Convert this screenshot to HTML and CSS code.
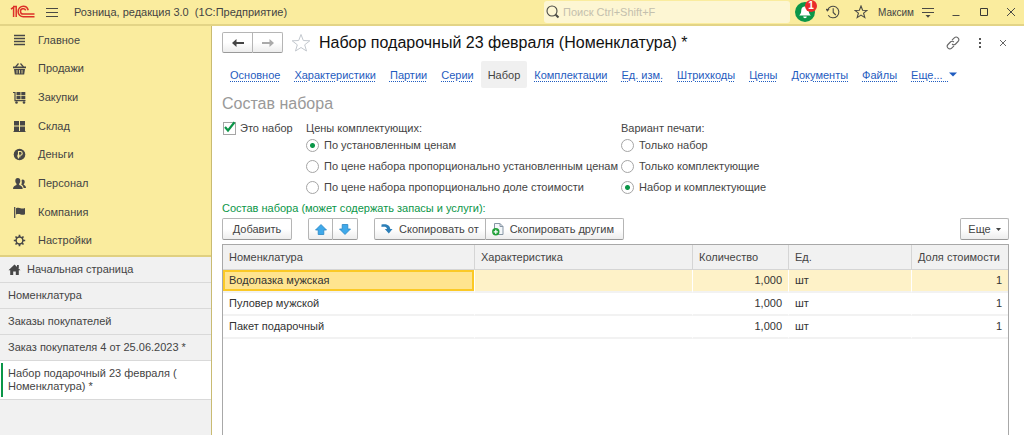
FILE: index.html
```html
<!DOCTYPE html>
<html lang="ru">
<head>
<meta charset="utf-8">
<title>Розница, редакция 3.0</title>
<link rel="stylesheet" href="styles.css">
</head>
<body>
<header class="topbar">
  <svg class="logo" width="26" height="14" viewBox="0 0 26 14" fill="none" stroke="#dc3028" stroke-width="1.5" aria-label="1С">
    <path d="M1 4.2 3.6 2.2V12M3 1.5H6.2V12"/>
    <path d="M18.2 5.2C17.6 2.9 15.7 1.3 13.3 1.3a5 5 0 0 0 0 10.4H24.5"/>
    <path d="M15.7 5.4a2.7 2.7 0 1 0-2.4 3.7H24.5"/>
  </svg>
  <button class="icon-btn menu-btn" aria-label="Меню">
    <svg width="12" height="11" viewBox="0 0 12 11" stroke="#4a4a45"><path d="M0 1.5h12M0 5.5h12M0 9.5h12"/></svg>
  </button>
  <div class="app-title">Розница, редакция 3.0&nbsp; (1С:Предприятие)</div>
  <label class="search">
    <svg width="14" height="14" viewBox="0 0 14 14" fill="none" stroke="#4a4a45"><circle cx="6" cy="6" r="5" stroke-width="1.1"/><path d="M9.7 9.7 12.5 12.5" stroke-width="2"/></svg>
    <input type="text" placeholder="Поиск Ctrl+Shift+F" aria-label="Поиск">
  </label>
  <button class="icon-btn bell" aria-label="Уведомления">
    <svg width="20" height="20" viewBox="0 0 20 20"><circle cx="10" cy="10" r="10" fill="#0b9648"/><path d="M10 4.500c-3 0-3.700 2.200-3.800 4.500-.1 2.300-.8 3.200-2 4.500h11.600c-1.200-1.300-1.900-2.200-2-4.500C13.700 6.700 13 4.500 10 4.500zM8.200 14.500h3.600a1.800 1.800 0 0 1-3.600 0z" fill="#fff"/></svg>
    <span class="badge">1</span>
  </button>
  <button class="icon-btn history" aria-label="История">
    <svg width="14" height="14" viewBox="0 0 14 14" fill="none" stroke="#4a4a45" stroke-width="1.1"><path d="M1.600 5A5.800 5.800 0 1 1 2.200 10.200M7.200 3.300V7.400L9.800 10"/><path d="M-.3 3.800 3.600 4.200 1.200 6.800z" fill="#4a4a45" stroke="none"/></svg>
  </button>
  <button class="icon-btn star" aria-label="Избранное">
    <svg width="14" height="14" viewBox="0 0 14 14" fill="none" stroke="#4a4a45" stroke-width="1.1"><path d="M7 1 8.600 5.200 13 5.400 9.600 8.200 10.800 12.600 7 10.100 3.200 12.600 4.400 8.200 1 5.400 5.400 5.200z"/></svg>
  </button>
  <a class="user" href="#">Максим</a>
  <button class="icon-btn panel" aria-label="Настройка панели">
    <svg width="12" height="11" viewBox="0 0 12 11"><path d="M0 1.500h12M0 5.500h12" stroke="#4a4a45"/><path d="M3.500 8h5L6 10.800z" fill="#4a4a45"/></svg>
  </button>
  <button class="icon-btn win" aria-label="Свернуть">
    <svg width="8" height="10" viewBox="0 0 8 10" stroke="#4a4a45"><path d="M0.500 8.500h7"/></svg>
  </button>
  <button class="icon-btn win" aria-label="Развернуть">
    <svg width="8" height="10" viewBox="0 0 8 10" fill="none" stroke="#3a3a36"><path d="M.5 1.500h7v7h-7z"/></svg>
  </button>
  <button class="icon-btn win" aria-label="Закрыть">
    <svg width="8" height="10" viewBox="0 0 8 10" stroke="#4a4a45"><path d="M0 1l8 8M8 1 0 9"/></svg>
  </button>
</header>

<div class="shell">
  <aside class="side">
    <nav class="sections">
      <a href="#"><svg viewBox="0 0 13 13"><path d="M1 1.500h11M1 4.500h11M1 7.500h11M1 10.500h11" stroke="#474747" stroke-width="1.500"/></svg>Главное</a>
      <a href="#"><svg viewBox="0 0 13 13" fill="#474747"><path d="M0 4.500h13v1.800H0zM1 7h11l-.8 5.500H1.800z"/><path d="M2.500 5 5.500 1.500M10.500 5 7.500 1.500" stroke="#474747" stroke-width="1.200"/><path d="M4 8v3.500M6.500 8v3.500M9 8v3.500" stroke="#faec9e" stroke-width=".8"/></svg>Продажи</a>
      <a href="#"><svg viewBox="0 0 13 13" fill="#474747"><path d="M0 1.500h2v8.200h10.500" fill="none" stroke="#474747" stroke-width="1.200"/><path d="M3.500 1h4v3.300h-4zM8.300 1h4v3.300h-4zM3.500 5h4v3.300h-4zM8.300 5h4v3.300h-4z"/><circle cx="3.500" cy="11.500" r="1.300"/><circle cx="11" cy="11.500" r="1.300"/></svg>Закупки</a>
      <a href="#"><svg viewBox="0 0 13 13" fill="#474747"><path d="M1 1h5v4.500H1zM7 1h5v4.500H7zM1 6.500h5V11H1zM7 6.500h5V11H7zM.5 11h12v1H.5z"/></svg>Склад</a>
      <a href="#"><svg viewBox="0 0 13 13"><circle cx="6.500" cy="6.500" r="5.800" fill="#474747"/><path d="M5.500 10.500V3.500h1.800a1.900 1.900 0 0 1 0 3.800H4.200M4.200 8.800h3.300" fill="none" stroke="#faec9e" stroke-width="1.100"/></svg>Деньги</a>
      <a href="#"><svg viewBox="0 0 13 13" fill="#474747"><path d="M4.800 1c1.700 0 2.600 1.200 2.500 3-.1 1.400-.6 2.100-1.100 2.800v1.300c1.500.6 3.500 1.200 3.500 3.900H0c0-2.700 2-3.300 3.500-3.900V6.800C3 6.100 2.400 5.400 2.300 4 2.200 2.200 3.100 1 4.800 1z"/><path d="M9.600 2.500c1.500 0 2.200 1 2.100 2.400 0 1-.5 1.700-.9 2.200v.9c1.200.4 2.200 1 2.200 3h-2.400c-.1-1.700-.9-2.600-2.300-3.300.6-1.300.6-2.300.3-4.600.2-.4.600-.6 1-.6z"/></svg>Персонал</a>
      <a href="#"><svg viewBox="0 0 13 13"><path d="M1.700 1v11" stroke="#474747" stroke-width="1.200"/><path d="M3 2.200c2-.9 3.600-.4 4.500 0 1.200.5 2.800.6 4.500-.2v6.300c-1.600.8-3.200.6-4.400.1C6.300 7.900 4.800 7.700 3 8.500z" fill="#474747"/></svg>Компания</a>
      <a href="#"><svg viewBox="0 0 13 13" fill="none" stroke="#474747"><circle cx="6.500" cy="6.500" r="3.400" stroke-width="1.500"/><path d="M6.500.8V3M6.500 10v2.200M.8 6.500H3M10 6.500h2.200M2.500 2.500 4 4M9 9l1.500 1.500M2.500 10.500 4 9M9 4l1.500-1.500" stroke-width="1.700"/></svg>Настройки</a>
    </nav>
    <nav class="windows">
      <a href="#"><svg width="13" height="12" viewBox="0 0 13 12"><path d="M6.500.5 12.500 6.200H10.800V11H7.800V7.500H5.200V11H2.200V6.200H.5zM9 1h1.800v3H9z" fill="#474747"/></svg>Начальная страница</a>
      <a href="#">Номенклатура</a>
      <a href="#">Заказы покупателей</a>
      <a href="#">Заказ покупателя 4 от 25.06.2023 *</a>
      <a href="#" class="current">Набор подарочный 23 февраля (<br>Номенклатура) *</a>
    </nav>
  </aside>

  <main class="form">
    <div class="form-head">
      <div class="btn-group">
        <button class="btn nav-btn" aria-label="Назад"><svg width="12" height="8" viewBox="0 0 12 8"><path d="M0 4 4.500 0V3H12V5H4.500V8z" fill="#444"/></svg></button>
        <button class="btn nav-btn" aria-label="Вперед"><svg width="12" height="8" viewBox="0 0 12 8"><path d="M12 4 7.500 0V3H0V5H7.500V8z" fill="#aaa"/></svg></button>
      </div>
      <svg class="fav" width="20" height="20" viewBox="0 0 20 20" fill="none" stroke="#c3c8ce"><path d="M10 1.500 12.300 7.500 18.800 7.800 13.700 11.800 15.500 18 10 14.500 4.500 18 6.300 11.800 1.200 7.800 7.700 7.500z"/></svg>
      <h1>Набор подарочный 23 февраля (Номенклатура) *</h1>
      <div class="form-tools">
        <button class="icon-btn" aria-label="Ссылка"><svg width="14" height="14" viewBox="0 0 14 14" fill="none" stroke="#666" stroke-width="1.100"><path d="M6 4.200 8.300 1.900a2.400 2.400 0 0 1 3.700 3.600L9.600 8a2.400 2.400 0 0 1-3.500 0M8 9.800 5.700 12.100A2.400 2.400 0 0 1 2 8.500L4.400 6a2.400 2.400 0 0 1 3.500 0"/></svg></button>
        <button class="icon-btn" aria-label="Ещё"><svg width="4" height="10" viewBox="0 0 4 10" fill="#555"><path d="M1 0h2v2H1zM1 4h2v2H1zM1 8h2v2H1z"/></svg></button>
        <button class="icon-btn" aria-label="Закрыть"><svg width="6" height="6" viewBox="0 0 6 6" stroke="#666"><path d="M0 0l6 6M6 0 0 6"/></svg></button>
      </div>
    </div>

    <nav class="tabs">
      <a href="#">Основное</a>
      <a href="#">Характеристики</a>
      <a href="#">Партии</a>
      <a href="#">Серии</a>
      <a href="#" class="active">Набор</a>
      <a href="#">Комплектации</a>
      <a href="#">Ед. изм.</a>
      <a href="#">Штрихкоды</a>
      <a href="#">Цены</a>
      <a href="#">Документы</a>
      <a href="#">Файлы</a>
      <a href="#" class="more">Еще...&nbsp;&nbsp;<svg width="8" height="5" viewBox="0 0 8 5"><path d="M0 .5h8L4 4.500z" fill="#1f5cc0"/></svg></a>
    </nav>

    <h2>Состав набора</h2>

    <div class="options">
      <label class="check"><input type="checkbox" checked><svg width="13" height="13" viewBox="0 0 13 13"><path d="M2 6 5 9.500 11.500 1.200" fill="none" stroke="#0b9648" stroke-width="2.200"/></svg>Это набор</label>
      <fieldset class="prices">
        <legend>Цены комплектующих:</legend>
        <label><input type="radio" name="price" checked>По установленным ценам</label>
        <label><input type="radio" name="price">По цене набора пропорционально установленным ценам</label>
        <label><input type="radio" name="price">По цене набора пропорционально доле стоимости</label>
      </fieldset>
      <fieldset>
        <legend>Вариант печати:</legend>
        <label><input type="radio" name="print">Только набор</label>
        <label><input type="radio" name="print">Только комплектующие</label>
        <label><input type="radio" name="print" checked>Набор и комплектующие</label>
      </fieldset>
    </div>

    <div class="list-title">Состав набора (может содержать запасы и услуги):</div>

    <div class="toolbar">
      <button class="btn add">Добавить</button>
      <div class="btn-group">
        <button class="btn move" aria-label="Вверх"><svg width="12" height="11" viewBox="0 0 12 11"><path d="M6 .5 11.500 6H8.800V10.500H3.200V6H.5z" fill="#3fa9ea" stroke="#2a86c4" stroke-width=".8"/></svg></button>
        <button class="btn move" aria-label="Вниз"><svg width="12" height="11" viewBox="0 0 12 11"><path d="M6 10.500 11.500 5H8.800V.5H3.200V5H.5z" fill="#3fa9ea" stroke="#2a86c4" stroke-width=".8"/></svg></button>
      </div>
      <div class="btn-group">
        <button class="btn copy-from"><svg width="12" height="12" viewBox="0 0 12 12"><path d="M.5 1.500C5 .5 9 1.800 9.300 6H11.500L7.800 10.500 3.800 6H6C5.800 3.800 3.500 3.500.5 4z" fill="#2c7fb8"/></svg>Скопировать от</button>
        <button class="btn copy-to"><svg width="12" height="13" viewBox="0 0 12 13"><path d="M2.500.5H8L11 3.500V11.500H2.500z" fill="#f4f7fa" stroke="#8796a5"/><path d="M8 .5v3h3" fill="none" stroke="#8796a5"/><circle cx="3.800" cy="8.800" r="3.700" fill="#22a139"/><path d="M1.700 8.800h4.200M3.800 6.700v4.200" stroke="#fff" stroke-width="1.200"/></svg>Скопировать другим</button>
      </div>
      <button class="btn more-btn">Еще<svg width="5" height="3" viewBox="0 0 5 3"><path d="M0 0h5L2.500 3z" fill="#444"/></svg></button>
    </div>

    <div class="grid">
      <table>
        <colgroup><col class="c-name"><col><col class="c-qty"><col class="c-unit"><col class="c-share"></colgroup>
        <thead>
          <tr><th>Номенклатура</th><th>Характеристика</th><th>Количество</th><th>Ед.</th><th>Доля стоимости</th></tr>
        </thead>
        <tbody>
          <tr class="selected"><td class="focus">Водолазка мужская</td><td></td><td class="num">1,000</td><td>шт</td><td class="num">1</td></tr>
          <tr><td>Пуловер мужской</td><td></td><td class="num">1,000</td><td>шт</td><td class="num">1</td></tr>
          <tr><td>Пакет подарочный</td><td></td><td class="num">1,000</td><td>шт</td><td class="num">1</td></tr>
        </tbody>
      </table>
    </div>
  </main>
</div>
</body>
</html>
```
FILE: styles.css
```css
* { box-sizing: border-box; }

body {
  margin: 0;
  height: 100vh;
  display: flex;
  flex-direction: column;
  overflow: hidden;
  font: 11px/13px "Liberation Sans", Arial, sans-serif;
  color: #444;
  background: #fff;
}

button, input { font: inherit; color: inherit; margin: 0; }
a { color: inherit; text-decoration: none; }
svg { display: block; flex: none; }

/* Top bar */
.topbar {
  display: flex;
  align-items: center;
  height: 26px;
  padding-left: 10px;
  background: #faec9e;
  border-bottom: 2px solid #e3d486;
}
.icon-btn {
  display: flex;
  align-items: center;
  justify-content: center;
  padding: 0;
  border: 0;
  background: none;
}
.menu-btn { margin-left: 10px; }
.app-title { margin-left: 16px; flex: 1; white-space: nowrap; }
.search {
  display: flex;
  align-items: center;
  gap: 3px;
  width: 246px;
  height: 22px;
  padding-left: 2px;
  border-radius: 3px;
  background: #fdf6d3;
}
.search input { flex: 1; min-width: 0; padding: 0; border: 0; outline: 0; background: none; }
.search input::placeholder { color: #c4c0ae; opacity: 1; }
.bell { position: relative; margin-left: 5px; }
.badge {
  position: absolute;
  top: -2px;
  right: -2px;
  width: 12px;
  height: 12px;
  border-radius: 6px;
  background: #ea2a2a;
  color: #fff;
  font-size: 10px;
  line-height: 12px;
  font-weight: bold;
}
.history { margin-left: 11px; }
.star { margin-left: 14px; }
.user { margin-left: 10px; font-size: 10px; }
.panel { margin-left: 8px; }
.win { width: 28px; }
.panel + .win { margin-left: 8px; }
.win:last-child { width: 26px; }

/* Left column */
.shell { flex: 1; min-height: 0; display: flex; }
.side {
  flex: none;
  width: 212px;
  display: flex;
  flex-direction: column;
  background: #f1f1f1;
  border-right: 1px solid #c9bb72;
}
.sections {
  display: grid;
  grid-auto-rows: 1fr;
  height: 231px;
  background: #faec9e;
  border-bottom: 2px solid #e0d080;
}
.sections a { display: flex; align-items: center; gap: 12px; padding-left: 13px; }
.sections svg { width: 13px; height: 13px; }
.windows a {
  display: flex;
  align-items: center;
  gap: 6px;
  padding: 6px 8px;
  border-bottom: 1px solid #d9d9d9;
}
.windows .current { position: relative; background: #fff; }
.windows .current::before {
  content: "";
  position: absolute;
  left: 1px;
  top: 2px;
  bottom: 2px;
  width: 2px;
  background: #0b9648;
}

/* Form */
.form {
  flex: 1;
  min-width: 0;
  display: flex;
  flex-direction: column;
  padding: 6px 15px 0 10px;
}
.form-head { display: flex; align-items: center; height: 21px; }
.fav { margin: 0 8px; }
h1 { flex: 1; margin: 0; font-size: 16px; line-height: 20px; font-weight: normal; color: #111; }
.form-tools { display: flex; align-items: center; gap: 18px; padding-right: 3px; }

.btn-group { display: flex; }
.btn {
  display: flex;
  align-items: center;
  justify-content: center;
  height: 22px;
  padding: 0;
  border: 1px solid #b5b5b5;
  border-bottom-color: #999;
  border-radius: 2px;
  background: linear-gradient(#fff 50%, #ededed);
  white-space: nowrap;
}
.btn-group .btn:first-child { border-radius: 2px 0 0 2px; }
.btn-group .btn:last-child { border-radius: 0 2px 2px 0; border-left: 0; }
.nav-btn { width: 31px; height: 21px; }
.nav-btn:last-child { width: 30px; }

.tabs { display: flex; margin-top: 8px; padding-left: 1px; }
.tabs a {
  padding: 8px 7px 6px;
  color: #1f5cc0;
  text-decoration: underline dotted 1px;
  text-underline-offset: 2px;
  white-space: nowrap;
}
.tabs .active { background: #f0f0f0; color: #444; text-decoration: none; border-radius: 2px; }
.more svg { display: inline-block; vertical-align: 2px; }

h2 { margin: 7px 0 0; font-size: 16px; line-height: 18px; font-weight: normal; color: #999; }

.options { display: flex; margin-top: 9px; }
.check { position: relative; display: flex; align-items: center; align-self: flex-start; gap: 4px; width: 84px; padding-left: 1px; white-space: nowrap; }
.check input { appearance: none; width: 13px; height: 13px; border: 1px solid #a5a5a5; background: #fff; }
.check svg { position: absolute; left: 1px; top: -1px; }
fieldset { margin: 0; padding: 0; border: 0; min-width: 0; }
.prices { width: 315px; }
legend { padding: 0; }
fieldset label { display: flex; align-items: center; gap: 5px; height: 21px; white-space: nowrap; }
input[type="radio"] {
  appearance: none;
  width: 13px;
  height: 13px;
  border: 1px solid #a5a5a5;
  border-radius: 50%;
  background: #fff;
}
input[type="radio"]:checked { background: radial-gradient(circle, #0b9648 2px, #fff 3px); }

.list-title { margin-top: 4px; color: #0b9648; }

.toolbar { display: flex; gap: 16px; margin-top: 3px; }
.add { width: 70px; }
.move { width: 25px; }
.copy-from { gap: 6px; padding: 0 6px; }
.copy-to { gap: 6px; padding: 0 9px 0 6px; }
.more-btn { gap: 5px; width: 49px; margin-left: auto; }

.grid {
  flex: 1;
  min-height: 0;
  margin-top: 4px;
  border: 1px solid #a8a8a8;
  border-bottom: 0;
}
table { width: 100%; table-layout: fixed; border-collapse: separate; border-spacing: 0; }
.c-name { width: 252px; }
.c-qty { width: 96px; }
.c-unit { width: 123px; }
.c-share { width: 96px; }
th, td { padding: 0 6px; text-align: left; font-weight: normal; white-space: nowrap; }
th { height: 25px; background: #f1f1f1; border-right: 1px solid #d5d5d5; border-bottom: 1px solid #d5d5d5; }
td { height: 23px; border-right: 1px solid #fff; border-bottom: 2px solid #f2f2f2; color: #333; }
th:last-child, td:last-child { border-right: 0; }
.num { text-align: right; }
.selected td { background: #fef2c8; }
.selected td.focus { background: #ffe48f; box-shadow: inset 0 0 0 2px #fbc926; }
```
